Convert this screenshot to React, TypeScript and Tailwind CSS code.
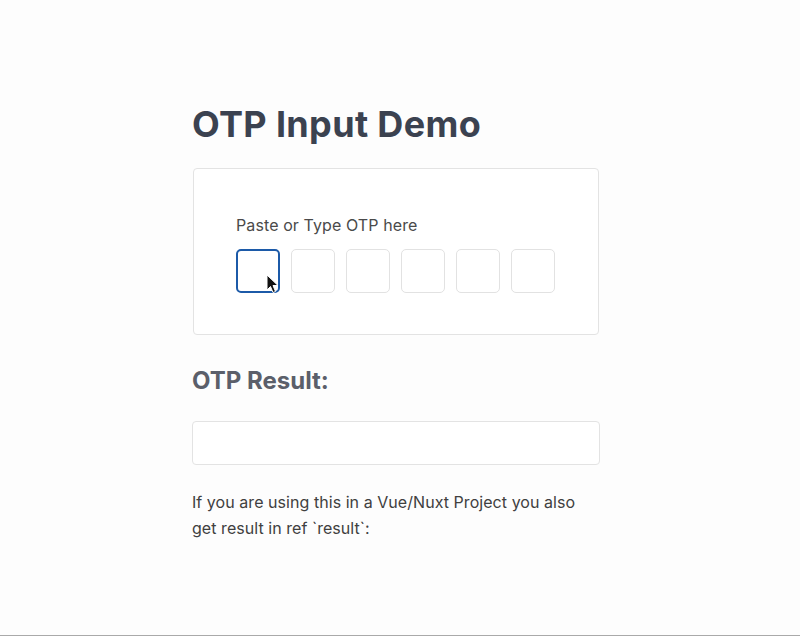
export default function App() {
  return (
    <div className="relative flex h-[636px] w-full flex-col border-b border-[#a9a9a9] bg-[#fdfdfd] pl-[192px] font-['Inter',sans-serif]">
      <div className="mt-[97px] flex w-[408px] flex-col">
        <h1 className="text-[36px] font-bold leading-[54px] tracking-[0.35px] text-[#3b4250]">OTP Input Demo</h1>

        <div className="mt-[17px] ml-px w-[406px] rounded border border-[#e3e3e3] bg-white px-[42px] pt-[44px] pb-[41px]">
          <p className="text-[16px] leading-[24px] tracking-[0.1px] text-[#4a4a4a]">Paste or Type OTP here</p>
          <div className="mt-[12px] flex gap-[11px]">
            {[0, 1, 2, 3, 4, 5].map((i) => (
              <div
                key={i}
                className={`h-[44px] w-[44px] rounded-[5px] bg-white ${
                  i === 0 ? 'border-2 border-[#1c5aa8]' : 'border border-[#e2e2e2]'
                }`}
              />
            ))}
          </div>
        </div>

        <h2 className="mt-[28px] text-[24px] font-bold leading-[36px] text-[#5b5f6a]">OTP Result:</h2>

        <div className="mt-[22px] h-[44px] w-[408px] rounded border border-[#e3e3e3] bg-white" />

        <p className="mt-[24px] text-[16px] leading-[26px] tracking-[0.05px] text-[#404040]">
          If you are using this in a Vue/Nuxt Project you also get result in ref `result`:
        </p>
      </div>

      <svg className="absolute left-[266px] top-[274px]" width="13" height="20" viewBox="0 0 13 20">
        <path d="M1 1 L1 16 L4.5 12.5 L7 18.5 L9.5 17.5 L7 11.5 L12 11.5 Z" fill="#111" stroke="#fff" strokeWidth="1" strokeLinejoin="round" />
      </svg>
    </div>
  );
}
